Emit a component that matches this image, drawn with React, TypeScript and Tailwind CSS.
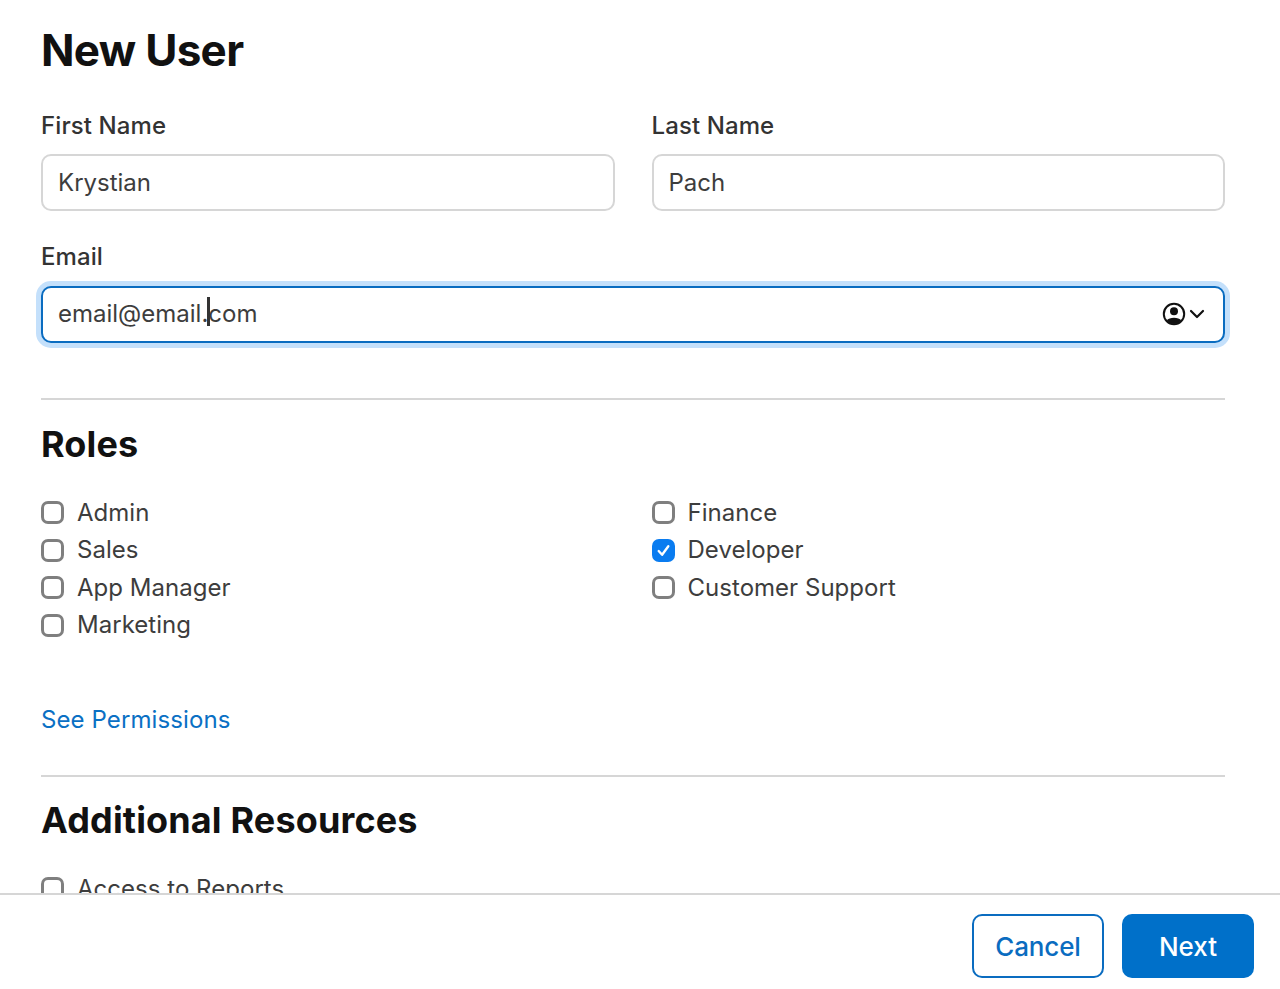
const leftRoles = [
  { label: 'Admin' },
  { label: 'Sales' },
  { label: 'App Manager' },
  { label: 'Marketing' },
]

const rightRoles = [
  { label: 'Finance' },
  { label: 'Developer', checked: true },
  { label: 'Customer Support' },
]

const Checkbox = ({ label, checked }: { label: string; checked?: boolean }) => (
  <div className="flex h-[37.5px] items-center gap-[13px]">
    {checked ? (
      <span className="flex h-[23px] w-[23px] items-center justify-center rounded-[7px] bg-[#0a7cf0]">
        <svg width="15" height="15" viewBox="0 0 14 14" fill="none">
          <path d="M2.5 7.5 L5.7 11 L11.5 3" stroke="#fff" strokeWidth="2.2" strokeLinecap="round" strokeLinejoin="round" />
        </svg>
      </span>
    ) : (
      <span className="h-[23px] w-[23px] rounded-[7px] border-[3px] border-[#7f7f7f] bg-white" />
    )}
    <span className="text-[24px] tracking-[0.03px] text-[#3d3d3d]">{label}</span>
  </div>
)

const TextField = ({ label, value }: { label: string; value: string }) => (
  <div className="flex-1">
    <div className="mb-[13px] h-[30px] text-[24px] leading-[30px] font-medium tracking-[0.1px] text-[#333]">{label}</div>
    <div className="flex h-[57px] items-center rounded-[10px] border-2 border-[#d6d6d6] bg-white px-[15px] text-[24px] text-[#3d3d3d]">
      {value}
    </div>
  </div>
)

export default function App() {
  return (
    <div className="flex h-[989px] w-[1280px] flex-col overflow-hidden bg-white font-['Inter',sans-serif]">
      <div className="h-[893px] overflow-hidden px-[41px]">
        <h1 className="pt-[22px] text-[44px] leading-[56px] font-bold tracking-[-0.7px] text-[#111]">New User</h1>

        <div className="mt-[33px] flex gap-[37px] pr-[14px]">
          <TextField label="First Name" value="Krystian" />
          <TextField label="Last Name" value="Pach" />
        </div>

        <div className="mt-[31px] mr-[14px]">
          <div className="mb-[14px] h-[30px] text-[24px] leading-[30px] font-medium tracking-[0.1px] text-[#333]">Email</div>
          <div className="flex h-[57px] items-center justify-between rounded-[10px] border-2 border-[#0a6cc0] bg-white pr-[18px] pb-[1px] pl-[15px] text-[24px] text-[#3d3d3d] shadow-[0_0_0_5px_#c4e0fb]">
            <span>
              email@email.
              <span className="relative">
                <span className="absolute top-[-2px] left-[-1px] h-[29px] w-[3px] bg-[#333]" />
                com
              </span>
            </span>
            <span className="flex items-center gap-[3px]">
              <svg width="24" height="24" viewBox="0 0 24 24">
                <circle cx="12" cy="12" r="10.2" fill="none" stroke="#111" strokeWidth="2" />
                <circle cx="12" cy="9.3" r="4" fill="#111" />
                <path d="M4.8 18.2 C7 14.8 17 14.8 19.2 18.2 C17.5 20.5 15 22 12 22 C9 22 6.5 20.5 4.8 18.2 Z" fill="#111" />
              </svg>
              <svg width="16" height="12" viewBox="0 0 16 12" fill="none">
                <path d="M2 3 L8 9 L14 3" stroke="#111" strokeWidth="2.2" strokeLinecap="round" strokeLinejoin="round" />
              </svg>
            </span>
          </div>
        </div>

        <div className="mt-[55px] mr-[14px] h-[2px] bg-[#d6d6d6]" />

        <h2 className="mt-[20px] text-[36px] leading-[48px] font-bold tracking-[0.15px] text-[#111]">Roles</h2>

        <div className="mt-[26px] flex gap-[37px] pr-[14px]">
          <div className="flex-1">
            {leftRoles.map((r) => (
              <Checkbox key={r.label} label={r.label} />
            ))}
          </div>
          <div className="flex-1">
            {rightRoles.map((r) => (
              <Checkbox key={r.label} label={r.label} checked={r.checked} />
            ))}
          </div>
        </div>

        <div className="mt-[60px] text-[24px] leading-[32px] tracking-[0.1px] text-[#0a70c4]">See Permissions</div>

        <div className="mt-[39px] mr-[14px] h-[2px] bg-[#d6d6d6]" />

        <h2 className="mt-[19px] text-[36px] leading-[48px] font-bold tracking-[0.15px] text-[#111]">Additional Resources</h2>

        <div className="mt-[26px]">
          <Checkbox label="Access to Reports" />
        </div>
      </div>

      <div className="flex flex-1 items-center justify-end gap-[18px] border-t-2 border-[#d6d6d6] pt-[8px] pr-[26px]">
        <button className="h-[64px] w-[132px] rounded-[10px] border-2 border-[#0a6cc0] bg-white text-[26px] font-medium tracking-[-0.15px] text-[#0a6cc0]">
          Cancel
        </button>
        <button className="h-[64px] w-[132px] rounded-[10px] bg-[#0070c9] text-[26px] font-medium text-white">
          Next
        </button>
      </div>
    </div>
  )
}
